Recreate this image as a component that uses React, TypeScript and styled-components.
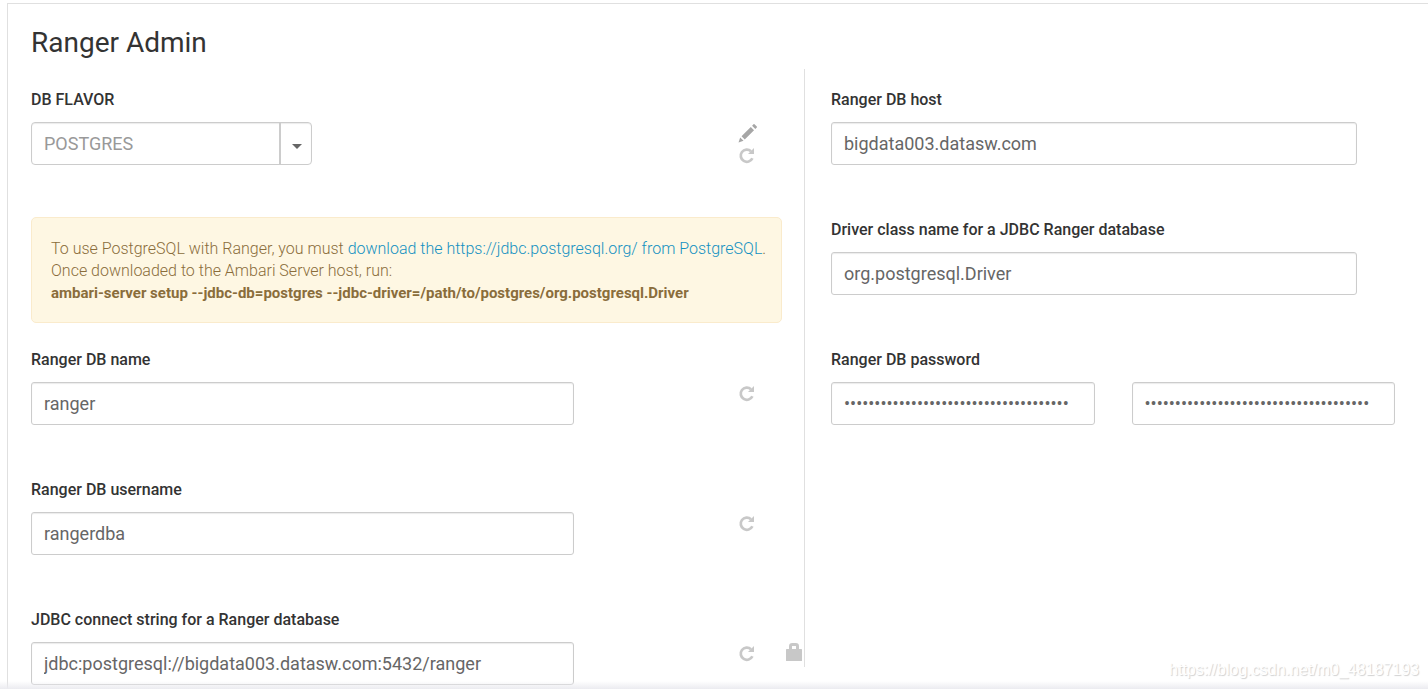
import React, { useState } from "react";
import styled, { createGlobalStyle } from "styled-components";

const GlobalStyle = createGlobalStyle`
  *, *::before, *::after { box-sizing: border-box; }
  body {
    margin: 0;
    background: #fff;
    color: #333;
    font-family: Roboto, "Liberation Sans", sans-serif;
  }
`;

const Page = styled.div`
  position: relative;
  min-height: 100vh;
  padding: 3px 0 0 7px;
  overflow: hidden;
`;

const Panel = styled.main`
  min-height: calc(100vh - 3px);
  border: 1px solid #e0e0e0;
  border-width: 1px 0 0 1px;
`;

const Title = styled.h1`
  margin: 0;
  padding: 21px 23px 8px;
  font-size: 28px;
  line-height: 36px;
  font-weight: 400;
`;

const Columns = styled.div`
  display: grid;
  grid-template-columns: minmax(0, 796fr) minmax(0, 624fr);
`;

const Column = styled.div<{ $divided?: boolean }>`
  padding: ${(p) => (p.$divided ? "18px 33px 0 26px" : "18px 0 0 23px")};
  border-left: ${(p) => (p.$divided ? "1px solid #e0e0e0" : "0")};
  margin-bottom: ${(p) => (p.$divided ? "18px" : "0")};
`;

const Field = styled.div`
  margin-bottom: 52px;

  &:last-child {
    margin-bottom: 0;
  }
`;

const Label = styled.label`
  display: block;
  margin-bottom: 9px;
  font-size: 16px;
  line-height: 26px;
  font-weight: 500;
`;

const ControlRow = styled.div`
  display: flex;
  align-items: flex-start;
`;

const Control = styled.div<{ $inset?: boolean }>`
  flex: 1;
  min-width: 0;
  margin-right: ${(p) => (p.$inset ? "38px" : "0")};
`;

const TextInput = styled.input`
  display: block;
  width: 100%;
  height: 43px;
  padding: 0 12px;
  border: 1px solid #ccc;
  border-radius: 3px;
  box-shadow: inset 0 1px 1px rgba(0, 0, 0, 0.08);
  background: #fff;
  color: #666;
  font-family: inherit;
  font-size: 18px;
`;

const PasswordPair = styled.div`
  display: grid;
  grid-template-columns: 1fr 1fr;
  gap: 37px;
`;

const SelectBox = styled.div`
  display: grid;
  grid-template-columns: 248px 33px;
  width: 281px;
`;

const Select = styled.select`
  grid-area: 1 / 1 / 2 / 3;
  appearance: none;
  height: 43px;
  padding: 0 44px 0 12px;
  border: 1px solid #ccc;
  border-radius: 4px;
  box-shadow: inset 0 1px 1px rgba(0, 0, 0, 0.08);
  background: #fff;
  color: #999;
  font-family: inherit;
  font-size: 18px;
  opacity: 1;
`;

const CaretCell = styled.span`
  grid-area: 1 / 2 / 2 / 3;
  z-index: 1;
  display: flex;
  align-items: center;
  justify-content: center;
  border-left: 2px solid #ccc;
  padding-top: 5px;
  pointer-events: none;
`;

const Caret = styled.span`
  border: 5px solid transparent;
  border-top-color: #666;
  border-bottom-width: 0;
`;

const Actions = styled.div<{ $stacked?: boolean }>`
  flex: none;
  display: flex;
  flex-direction: ${(p) => (p.$stacked ? "column" : "row")};
  gap: ${(p) => (p.$stacked ? "2px" : "29px")};
  width: 230px;
  padding: 1px 0 0 164px;
`;

const IconButton = styled.button<{ $dark?: boolean }>`
  width: 18px;
  height: 20px;
  padding: 0;
  border: 0;
  background: none;
  color: ${(p) => (p.$dark ? "#a6a6a6" : "#c8c8c8")};
  cursor: pointer;

  svg {
    display: block;
    overflow: visible;
  }
`;

const Notice = styled.div`
  margin: 0 22px 24px 0;
  padding: 20px 8px 18px 19px;
  border: 1px solid #faebcc;
  border-radius: 5px;
  background: #fef7e3;
  color: #8a6d3b;
  font-size: 16px;
  line-height: 22px;
  font-weight: 300;

  p {
    margin: 0;
  }
`;

const Link = styled.a`
  color: #1491c1;
  text-decoration: none;
`;

const Command = styled.strong`
  display: block;
  font-size: 15px;
  font-weight: 700;
`;

const BottomFade = styled.div`
  position: absolute;
  inset: auto 0 0 0;
  height: 8px;
  background: linear-gradient(rgba(235, 235, 240, 0), rgb(235, 235, 240));
  pointer-events: none;
`;

const Watermark = styled.div`
  position: absolute;
  right: 9px;
  bottom: 8px;
  color: #fff;
  text-shadow: 1px 1px 1px #d0d0d0;
  font-family: "Liberation Sans", sans-serif;
  font-size: 16px;
  line-height: 22px;
  pointer-events: none;
`;

const PencilIcon = () => (
  <svg width="19" height="19" viewBox="-50 -16 1260 1260" fill="currentColor" aria-hidden="true">
    <path
      transform="matrix(1 0 0 -1 0 1194)"
      d="M1011 1210q19 0 33 -13l153 -153q13 -14 13 -33t-13 -33l-99 -92l-214 214l95 96q13 14 32 14zM1013 800l-615 -614l-214 214l614 614zM317 96l-333 -112l110 335z"
    />
  </svg>
);

const RepeatIcon = () => (
  <svg width="18" height="20" viewBox="0 0 18 20" aria-hidden="true">
    <path d="M13 6.2A6.1 6.1 0 1 0 14.4 13.2" fill="none" stroke="currentColor" strokeWidth="2.7" />
    <path d="M16 3V9H10Z" fill="currentColor" />
  </svg>
);

const LockIcon = () => (
  <svg width="18" height="20" viewBox="0 0 18 20" aria-hidden="true">
    <path d="M5.5 7V3.2Q5.5 1.5 7.2 1.5H10.8Q12.5 1.5 12.5 3.2V7" fill="none" stroke="currentColor" strokeWidth="3" />
    <rect x="1" y="6" width="16" height="12" rx="0.5" fill="currentColor" />
  </svg>
);

type FieldProps = { id: string; label: string; initial: string };

function useText(initial: string) {
  const [value, setValue] = useState(initial);
  return {
    value,
    onChange: (e: React.ChangeEvent<HTMLInputElement>) => setValue(e.target.value),
  };
}

function ConfigField({ id, label, initial, lockable }: FieldProps & { lockable?: boolean }) {
  const text = useText(initial);
  return (
    <Field>
      <Label htmlFor={id}>{label}</Label>
      <ControlRow>
        <Control>
          <TextInput id={id} type="text" {...text} />
        </Control>
        <Actions>
          <IconButton type="button" aria-label={`Reset ${label}`}>
            <RepeatIcon />
          </IconButton>
          {lockable && (
            <IconButton type="button" aria-label={`Lock ${label}`}>
              <LockIcon />
            </IconButton>
          )}
        </Actions>
      </ControlRow>
    </Field>
  );
}

function PlainField({ id, label, initial }: FieldProps) {
  const text = useText(initial);
  return (
    <Field>
      <Label htmlFor={id}>{label}</Label>
      <Control $inset>
        <TextInput id={id} type="text" {...text} />
      </Control>
    </Field>
  );
}

function PasswordField() {
  const password = useText("x".repeat(37));
  const confirmation = useText("x".repeat(37));
  return (
    <Field>
      <Label htmlFor="db-password">Ranger DB password</Label>
      <PasswordPair>
        <TextInput id="db-password" type="password" {...password} />
        <TextInput type="password" aria-label="Confirm Ranger DB password" {...confirmation} />
      </PasswordPair>
    </Field>
  );
}

export default function App() {
  return (
    <>
      <GlobalStyle />
      <Page>
        <Panel>
          <Title>Ranger Admin</Title>
          <Columns>
            <Column>
              <Field>
                <Label htmlFor="db-flavor">DB FLAVOR</Label>
                <ControlRow>
                  <Control>
                    <SelectBox>
                      <Select id="db-flavor" defaultValue="POSTGRES">
                        <option>POSTGRES</option>
                      </Select>
                      <CaretCell>
                        <Caret />
                      </CaretCell>
                    </SelectBox>
                  </Control>
                  <Actions $stacked>
                    <IconButton type="button" $dark aria-label="Edit DB flavor">
                      <PencilIcon />
                    </IconButton>
                    <IconButton type="button" aria-label="Reset DB flavor">
                      <RepeatIcon />
                    </IconButton>
                  </Actions>
                </ControlRow>
              </Field>
              <Notice>
                <p>
                  To use PostgreSQL with Ranger, you must{" "}
                  <Link href="https://jdbc.postgresql.org/">
                    download the https://jdbc.postgresql.org/ from PostgreSQL
                  </Link>
                  .
                </p>
                <p>Once downloaded to the Ambari Server host, run:</p>
                <p>
                  <Command>
                    ambari-server setup --jdbc-db=postgres --jdbc-driver=/path/to/postgres/org.postgresql.Driver
                  </Command>
                </p>
              </Notice>
              <ConfigField id="db-name" label="Ranger DB name" initial="ranger" />
              <ConfigField id="db-user" label="Ranger DB username" initial="rangerdba" />
              <ConfigField
                id="jdbc-url"
                label="JDBC connect string for a Ranger database"
                initial="jdbc:postgresql://bigdata003.datasw.com:5432/ranger"
                lockable
              />
            </Column>
            <Column $divided>
              <PlainField id="db-host" label="Ranger DB host" initial="bigdata003.datasw.com" />
              <PlainField
                id="jdbc-driver"
                label="Driver class name for a JDBC Ranger database"
                initial="org.postgresql.Driver"
              />
              <PasswordField />
            </Column>
          </Columns>
        </Panel>
        <BottomFade />
        <Watermark>https://blog.csdn.net/m0_48187193</Watermark>
      </Page>
    </>
  );
}
